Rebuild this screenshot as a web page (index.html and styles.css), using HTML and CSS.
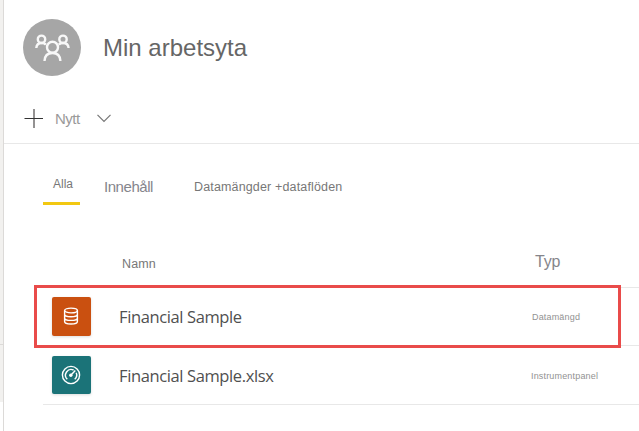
FILE: index.html
```html
<!DOCTYPE html>
<html lang="sv">
<head>
<meta charset="utf-8">
<title>Min arbetsyta</title>
<link rel="stylesheet" href="styles.css">
</head>
<body>
<div class="shell">
  <aside class="rail"><div class="rail-top"></div><div class="rail-mid"></div></aside>
  <main class="main">
    <header class="workspace">
      <svg class="avatar" width="58" height="57" viewBox="0 0 58 57" fill="none" stroke="#f8f8f8" stroke-width="2.400">
        <ellipse cx="29" cy="28.500" rx="29" ry="28.500" fill="#a6a6a6" stroke="none"/>
        <circle cx="18.500" cy="20.300" r="3.700"/>
        <circle cx="40" cy="20.300" r="3.700"/>
        <path d="M13.300 29c.2-3 2-5 5.400-5 2 0 3.200.5 4.200 1.600M45.600 29c-.2-3-2-5-5.600-5-2 0-3.200.5-4.200 1.600"/>
        <circle cx="29.500" cy="28.300" r="5.500"/>
        <path d="M21.500 42c.2-4.800 3-8 8-8s7.700 3.200 7.900 8"/>
      </svg>
      <h1 class="title">Min arbetsyta</h1>
    </header>
    <div class="toolbar">
      <svg width="19" height="19" viewBox="0 0 19 19" fill="none"><path d="M10 0v19" stroke="#949292" stroke-width="2"/><path d="M.5 9.500h18.500" stroke="#333" stroke-width="1"/></svg>
      <span class="new">Nytt</span>
      <svg class="chevron" width="14" height="9" viewBox="0 0 14 9" fill="none" stroke="#777" stroke-width="1.200"><path d="M.5.8 7 7.500 13.500.8"/></svg>
    </div>
    <nav class="tabs">
      <div class="tab active"><span>Alla</span></div>
      <div class="tab content"><span>Innehåll</span></div>
      <div class="tab data"><span>Datamängder +dataflöden</span></div>
    </nav>
    <section class="table">
      <div class="row head"><span class="name"><span>Namn</span></span><span class="type"><span>Typ</span></span></div>
      <div class="row first">
        <span class="tile dataset"><svg width="16" height="18" viewBox="0 0 16 18" fill="none" stroke="#fff" stroke-width="1.400"><ellipse cx="8" cy="3.500" rx="6.400" ry="2.400"/><path d="M1.600 3.500v11c0 1.500 2.700 2.500 6.400 2.500s6.400-1 6.400-2.500v-11M1.600 7.200c0 1.500 2.700 2.500 6.400 2.500s6.400-1 6.400-2.500M1.600 10.900c0 1.500 2.700 2.500 6.400 2.500s6.400-1 6.400-2.500"/></svg></span>
        <span class="name"><span>Financial Sample</span></span><span class="type"><span>Datamängd</span></span>
      </div>
      <div class="row second">
        <span class="tile dashboard"><svg width="20" height="20" viewBox="0 0 20 20" fill="none" stroke="#fff"><circle cx="10" cy="10" r="8.600" stroke-width="1.400"/><path d="M6.300 14.300a5.700 5.700 0 0 1 6.300-9.300M15.200 7.800a5.700 5.700 0 0 1-1.500 6.500" stroke-width="1.400"/><path d="m10 10 4.300-4.500" stroke-width="1.500"/><circle cx="9.800" cy="10.300" r="1.700" fill="#fff" stroke="none"/></svg></span>
        <span class="name"><span>Financial Sample.xlsx</span></span><span class="type"><span>Instrumentpanel</span></span>
      </div>
      <div class="highlight"></div>
    </section>
  </main>
</div>
</body>
</html>
```

FILE: styles.css
```css
* { box-sizing: border-box; }
body { margin: 0; background: #fff; font-family: "Liberation Sans", Arial, sans-serif; color: #777; overflow: hidden; }
.shell { display: flex; width: 639px; height: 431px; }
.rail { width: 4px; border-right: 1px solid #dcdad8; }
.rail-top { height: 345px; background: #f2f1ef; border-bottom: 1px solid #dcdad8; }
.rail-mid { height: 57px; background: #f2f1ef; }
.main { flex: 1; min-width: 0; }
.workspace { display: flex; height: 94px; padding: 19px 0 0 19px; }
.avatar { flex: none; }
.title { margin: 15px 0 0 22px; font-size: 24px; line-height: 28px; font-weight: 400; color: #666; white-space: nowrap; }
.toolbar { display: flex; align-items: center; height: 50px; padding-left: 20px; border-bottom: 1px solid #e8e8e8; }
.new { margin-left: 12px; width: 42px; font-size: 15px; color: #9a9a9a; letter-spacing: -.5px; }
.tabs { display: flex; height: 61px; padding-left: 39px; white-space: nowrap; }
.tab { display: flex; }
.active { width: 37px; border-bottom: 3px solid #f2c811; padding: 33px 0 0 10px; font-size: 12px; line-height: 15px; }
.content { width: 90px; margin-left: 24px; padding-top: 34px; font-size: 15px; line-height: 17px; color: #85858c; letter-spacing: -.45px; }
.data { padding-top: 35px; font-size: 12.5px; line-height: 16px; letter-spacing: .15px; }
.table { position: relative; margin-left: 39px; }
.row { display: grid; align-items: center; border-bottom: 1px solid #e8e8e8; white-space: nowrap; }
.head { grid-template-columns: 79px 413px 1fr; height: 83px; padding-top: 33px; font-size: 12px; }
.head .name { grid-column: 2; padding-top: 3px; font-size: 12.5px; letter-spacing: .1px; }
.head .type { padding-bottom: 2px; font-size: 16px; color: #85858b; letter-spacing: -.2px; }
.first, .second { grid-template-columns: 76px 412px 1fr; }
.first { height: 58px; }
.second { height: 59px; }
.tile { display: flex; align-items: center; justify-content: center; width: 39px; height: 39px; margin-left: 9px; padding-right: 2px; border-radius: 2px; box-shadow: 0 1px 3px #ddd; }
.dataset { padding-bottom: 1px; background: #ca5010; }
.dashboard { height: 38px; background: #1b7378; }
.first .name, .second .name { font: 16.5px "Open Sans", "Noto Sans", sans-serif; color: #505050; letter-spacing: -.38px; }
.first .type, .second .type { font-size: 9px; color: #929292; letter-spacing: .17px; }
.first .type { padding-left: 1px; }
.second .type { padding-top: 1px; }
.highlight { position: absolute; left: -9px; top: 80px; width: 587px; height: 63px; border: 3px solid #e94b4a; }
```
